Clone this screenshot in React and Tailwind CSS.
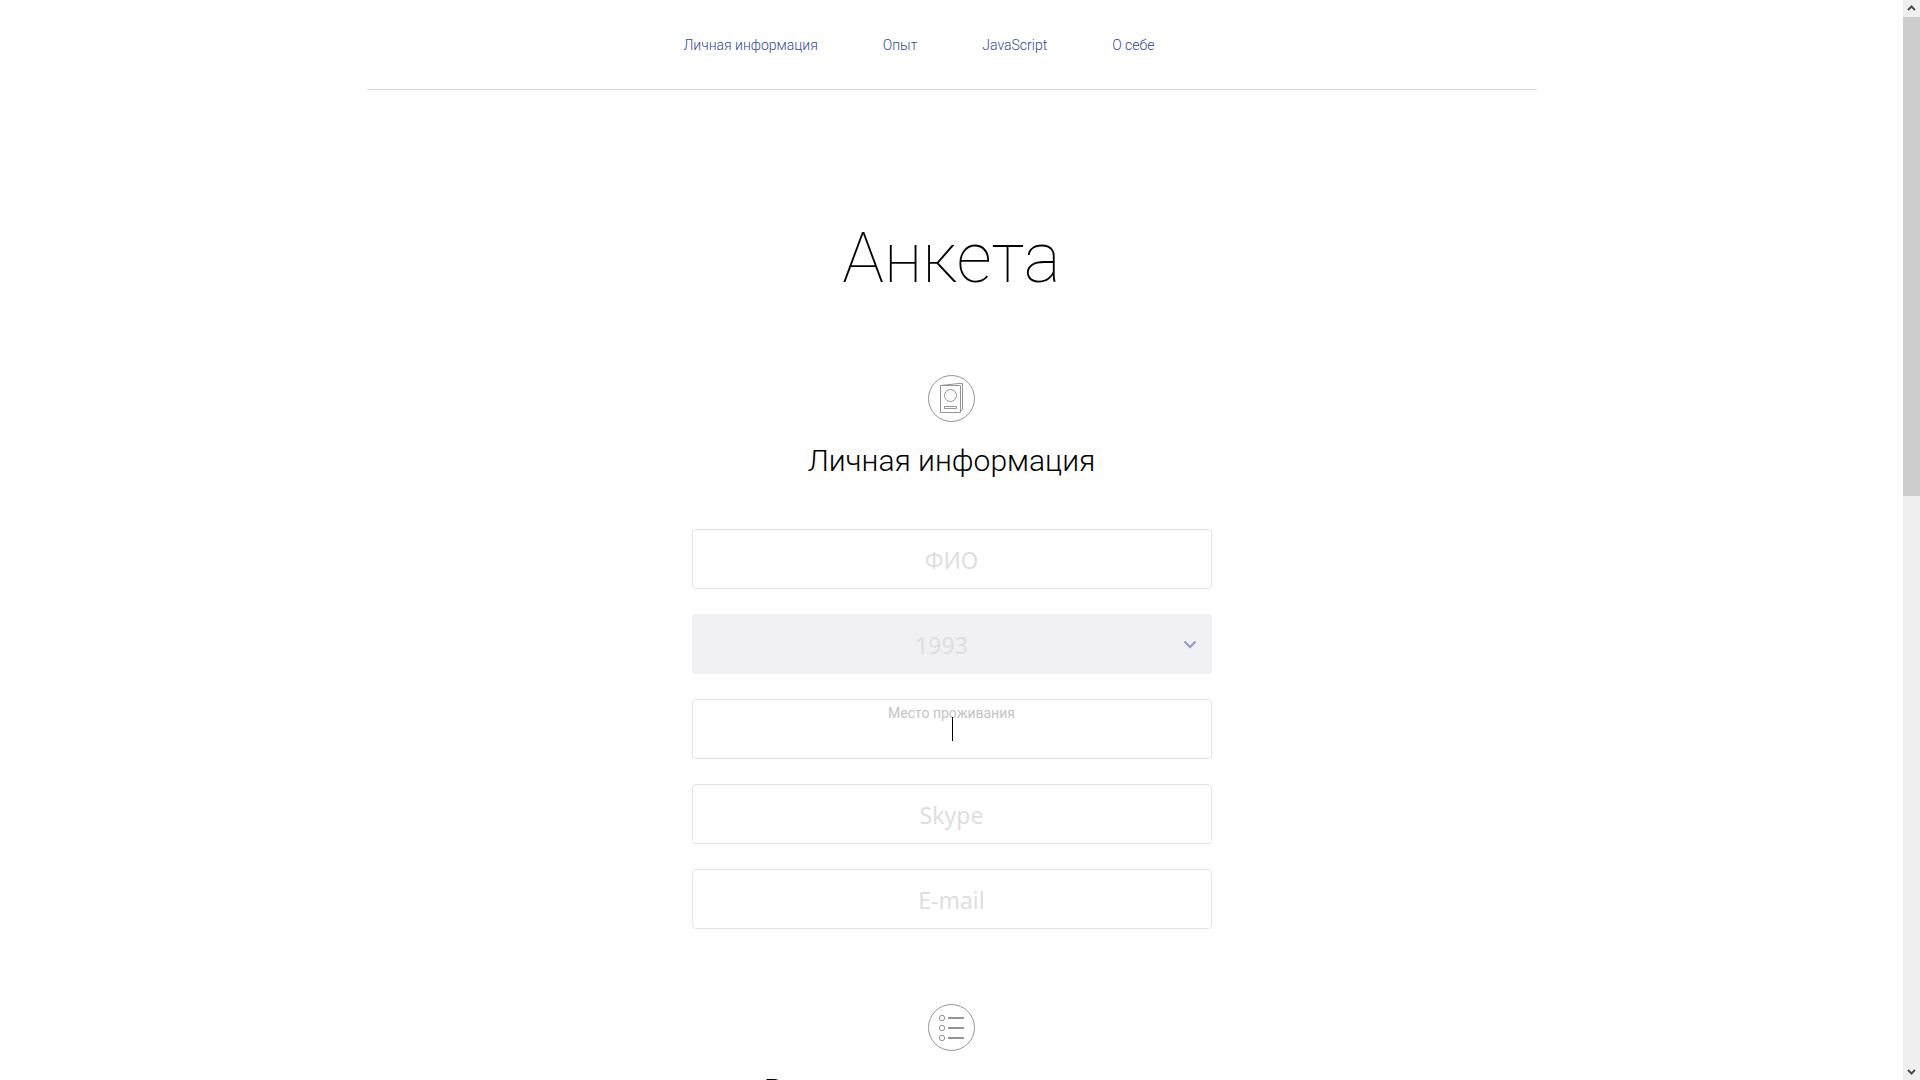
import React from "react";

const navItems = ["Личная информация", "Опыт", "JavaScript", "О себе"];

const fieldClass =
  "block h-15 w-full rounded border border-[#e3e3e3] bg-white pt-0.5 text-center font-['Noto_Sans',sans-serif] text-[23px] text-black outline-none placeholder:text-[#dedede]";

function PassportIcon() {
  return (
    <svg width="47" height="47" viewBox="0 0 47 47" fill="none" stroke="#959595" aria-hidden="true">
      <circle cx="23.5" cy="23.5" r="23" />
      <path d="M12.5 10.5h20v27h-20z" />
      <path d="M12.5 10.5L31 8.500h3.500v26l-2 2" />
      <circle cx="22.500" cy="20.5" r="6" />
      <path d="M16.500 31.500h12v2h-12z" />
    </svg>
  );
}

function ListIcon() {
  return (
    <svg width="47" height="47" viewBox="0 0 47 47" fill="none" stroke="#959595" aria-hidden="true">
      <circle cx="23.5" cy="23.5" r="23" />
      {[14, 24, 34].map((y) => (
        <g key={y}>
          <circle cx="14" cy={y} r="2.700" />
          <path d={`M20 ${y}h16`} strokeWidth="2" />
        </g>
      ))}
    </svg>
  );
}

function SectionHead({ icon, children }) {
  return (
    <div className="flex flex-col items-center">
      {icon}
      <h2 className="mt-[17px] text-[30px] leading-[43px] font-light whitespace-nowrap">{children}</h2>
    </div>
  );
}

function Scrollbar() {
  return (
    <div className="flex w-[17px] shrink-0 flex-col bg-[#f0f0f0]" aria-hidden="true">
      <svg className="shrink-0" width="17" height="17" viewBox="0 0 17 17" fill="none" stroke="#505050" strokeWidth="2">
        <path d="M5 10l3.500-3.500L12 10" />
      </svg>
      <div className="flex-[479] bg-[#cdcdcd]" />
      <div className="flex-[567]" />
      <svg className="shrink-0" width="17" height="17" viewBox="0 0 17 17" fill="none" stroke="#505050" strokeWidth="2">
        <path d="M5 7l3.500 3.500L12 7" />
      </svg>
    </div>
  );
}

export default function App() {
  return (
    <div className="flex h-screen overflow-hidden bg-white font-[Roboto,sans-serif] text-black">
      <div className="min-w-0 flex-1 overflow-hidden">
        <header className="mx-auto max-w-[1170px] border-b border-[#d9d9d9] pt-[35px] pb-[33px]">
          <nav className="flex justify-center">
            {navItems.map((item) => (
              <a key={item} href="#" className="mr-[65px] text-sm leading-[21px] font-light text-[#2f4a94]">
                {item}
              </a>
            ))}
          </nav>
        </header>
        <main className="mx-auto max-w-[520px]">
          <h1 className="mt-[120px] text-center text-[70px] leading-[96px] font-thin">Анкета</h1>
          <form className="mt-[69px]">
            <SectionHead icon={<PassportIcon />}>Личная информация</SectionHead>
            <div className="mt-[47px] flex flex-col gap-[25px]">
              <input className={fieldClass} type="text" aria-label="ФИО" placeholder="ФИО" />
              <div className="relative">
                <select
                  aria-label="Год рождения"
                  defaultValue="1993"
                  className="block h-15 w-full appearance-none rounded bg-[#f1f1f3] pt-0.5 pr-5 text-center font-['Noto_Sans',sans-serif] text-[23px] text-[#dedede] outline-none [text-align-last:center]"
                >
                  <option>1993</option>
                </select>
                <svg
                  className="pointer-events-none absolute top-6 right-4"
                  width="12"
                  height="12"
                  viewBox="0 0 12 12"
                  fill="none"
                  stroke="#8a9cc8"
                  strokeWidth="2"
                  aria-hidden="true"
                >
                  <path d="M0.500 3.500L6 9l5.500-5.500" />
                </svg>
              </div>
              <div className="relative">
                <input id="place" className={fieldClass} type="text" />
                <label htmlFor="place" className="absolute inset-x-0 top-1 text-center text-sm leading-5 text-[#c4c4c4]">
                  Место проживания
                </label>
                <span className="absolute top-[18px] left-1/2 h-6 w-px bg-black" />
              </div>
              <input className={fieldClass} type="text" aria-label="Skype" placeholder="Skype" />
              <input className={fieldClass} type="email" aria-label="E-mail" placeholder="E-mail" />
            </div>
            <div className="mt-[75px]">
              <SectionHead icon={<ListIcon />}>Расскажите о своем опыте</SectionHead>
            </div>
          </form>
        </main>
      </div>
      <Scrollbar />
    </div>
  );
}
